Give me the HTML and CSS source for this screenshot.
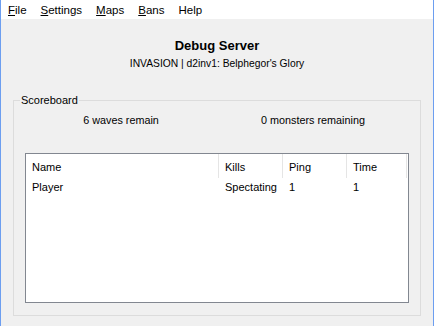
FILE: index.html
```html
<!DOCTYPE html>
<html lang="en">
<head>
    <meta charset="UTF-8">
    <meta name="viewport" content="width=device-width, initial-scale=1.0">
    <title>Debug Server</title>
    <link rel="stylesheet" href="styles.css">
</head>
<body>
    <div class="window">
        <ul class="menu-bar">
            <li><u>F</u>ile</li>
            <li><u>S</u>ettings</li>
            <li><u>M</u>aps</li>
            <li><u>B</u>ans</li>
            <li>Help</li>
        </ul>

        <div class="server-info">
            <h1>Debug Server</h1>
            <p>INVASION | d2inv1: Belphegor's Glory</p>
        </div>

        <fieldset class="scoreboard">
            <legend>Scoreboard</legend>
            <div class="stats">
                <span>6 waves remain</span>
                <span>0 monsters remaining</span>
            </div>
            <div class="player-list">
                <table>
                    <thead>
                        <tr>
                            <th class="col-name">Name</th>
                            <th class="col-kills">Kills</th>
                            <th class="col-ping">Ping</th>
                            <th class="col-time">Time</th>
                        </tr>
                    </thead>
                    <tbody>
                        <tr>
                            <td>Player</td>
                            <td>Spectating</td>
                            <td>1</td>
                            <td>1</td>
                        </tr>
                    </tbody>
                </table>
            </div>
        </fieldset>
    </div>
</body>
</html>
```

FILE: styles.css
```css
body {
    margin: 0;
    font-family: "Liberation Sans", Arial, sans-serif;
    font-size: 11px;
    color: #000;
}

.window {
    height: 326px;
    box-sizing: border-box;
    background-color: #f0f0f0;
    border-left: 1px solid #6c9ef0;
    border-right: 1px solid #6c9ef0;
}

.menu-bar {
    display: flex;
    margin: 0;
    padding: 0;
    list-style: none;
    height: 19px;
    background-color: #fff;
    font-size: 11.5px;
}

.menu-bar li {
    padding: 2px 7px 0;
    line-height: 17px;
}

.server-info {
    padding-top: 19px;
    text-align: center;
}

.server-info h1 {
    margin: 0;
    font-size: 13px;
    line-height: 15px;
}

.server-info p {
    margin: 4px 0 0;
    font-size: 10.3px;
    line-height: 13px;
}

.scoreboard {
    margin: 24px 12px 0;
    padding: 7px 11px 12px;
    min-width: 0;
    border: 1px solid #dcdcdc;
}

.scoreboard legend {
    margin-left: -5px;
    padding: 0 1px;
    line-height: 13px;
}

.stats {
    display: flex;
    font-size: 10.8px;
    line-height: 13px;
}

.stats span {
    flex: 1;
    text-align: center;
}

.player-list {
    margin-top: 26px;
    height: 150px;
    box-sizing: border-box;
    background-color: #fff;
    border: 1px solid #828790;
}

table {
    width: 381px;
    table-layout: fixed;
    border-collapse: separate;
    border-spacing: 0;
}

th, td {
    box-sizing: border-box;
    padding: 0 0 0 6px;
    text-align: left;
    font-weight: normal;
    white-space: nowrap;
}

th {
    padding-top: 2px;
    line-height: 22px;
    border-right: 1px solid #e5e5e5;
}

td {
    line-height: 19px;
}

.col-name {
    width: 193px;
}

.col-kills,
.col-ping {
    width: 64px;
}

.col-time {
    width: 60px;
}
```
